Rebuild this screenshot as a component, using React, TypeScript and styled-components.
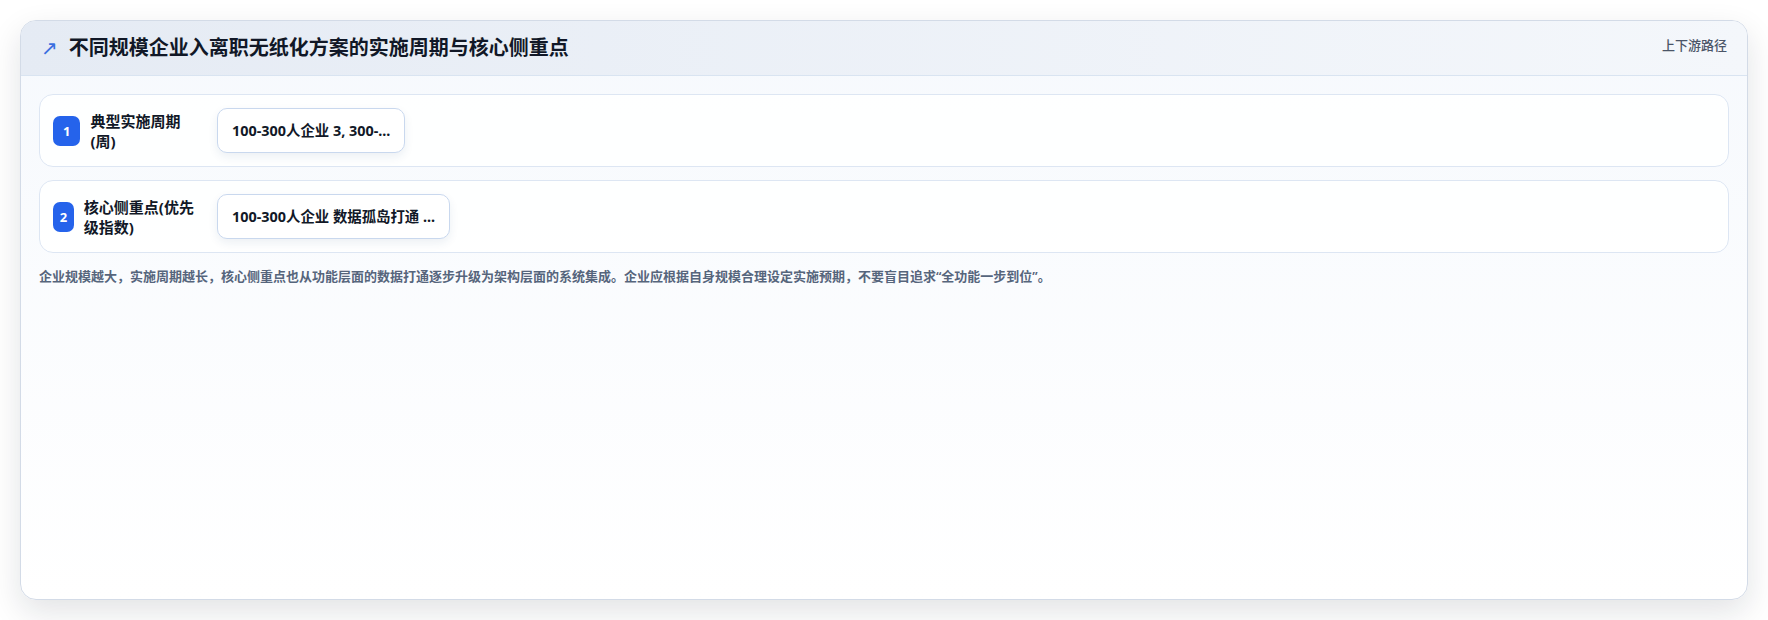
import React from 'react';
import styled, { createGlobalStyle } from 'styled-components';

const GlobalStyle = createGlobalStyle`
  html, body {
    margin: 0;
    padding: 0;
    background: #ffffff;
  }
  body {
    font-family: "Noto Sans", "Noto Sans CJK SC", sans-serif;
    color: #111827;
  }
`;

const items = [
  {
    label: '典型实施周期(周)',
    value: '100-300人企业 3, 300-1000人企业 6, 1000人以上企业 12',
  },
  {
    label: '核心侧重点(优先级指数)',
    value: '100-300人企业 数据孤岛打通 8, 300-1000人企业 流程标准化 7',
  },
];

const shorten = (text: string, max = 18) =>
  text.length > max ? text.slice(0, max) + '...' : text;

const App = () => {
  return (
    <Page>
      <GlobalStyle />
      <Card>
        <Header>
          <TitleWrap>
            <TitleIcon>↗</TitleIcon>
            <Title>不同规模企业入离职无纸化方案的实施周期与核心侧重点</Title>
          </TitleWrap>
          <HeaderTag>上下游路径</HeaderTag>
        </Header>
        <Body>
          {items.map((item, i) => (
            <Row key={item.label}>
              <RowHead>
                <Badge>{i + 1}</Badge>
                <Label>{item.label}</Label>
              </RowHead>
              <Chip>{shorten(item.value)}</Chip>
            </Row>
          ))}
          <Note>
            企业规模越大，实施周期越长，核心侧重点也从功能层面的数据打通逐步升级为架构层面的系统集成。企业应根据自身规模合理设定实施预期，不要盲目追求“全功能一步到位”。
          </Note>
        </Body>
      </Card>
    </Page>
  );
};

export default App;

const Page = styled.div`
  padding: 20px;
`;

const Card = styled.section`
  height: 580px;
  box-sizing: border-box;
  display: flex;
  flex-direction: column;
  border: 1px solid #d3dbe7;
  border-radius: 16px;
  overflow: hidden;
  background: linear-gradient(180deg, #f6f9fd 0%, #ffffff 100%);
  box-shadow: 0 12px 32px rgba(15, 23, 42, 0.12);
`;

const Header = styled.header`
  display: flex;
  justify-content: space-between;
  align-items: flex-start;
  padding: 13px 20px;
  background: linear-gradient(90deg, #e5ebf4 0%, #f4f7fb 100%);
  border-bottom: 1px solid #d9e4f1;
`;

const TitleWrap = styled.div`
  display: flex;
  align-items: center;
  gap: 11px;
`;

const TitleIcon = styled.span`
  font-family: "DejaVu Sans", sans-serif;
  font-size: 20px;
  font-weight: 400;
  line-height: 28px;
  color: #3b6fe0;
`;

const Title = styled.h2`
  margin: 0;
  font-size: 20px;
  line-height: 28px;
  font-weight: 700;
  color: #111827;
`;

const HeaderTag = styled.span`
  margin-top: 1px;
  font-size: 13px;
  line-height: 20px;
  font-weight: 500;
  color: #4b5568;
`;

const Body = styled.div`
  display: flex;
  flex-direction: column;
  gap: 13px;
  padding: 18px;
`;

const Row = styled.div`
  display: flex;
  align-items: center;
  gap: 14px;
  padding: 13px;
  border: 1px solid #dde6f3;
  border-radius: 14px;
  background: rgba(255, 255, 255, 0.85);
`;

const RowHead = styled.div`
  display: flex;
  align-items: center;
  gap: 10px;
  flex: 0 0 150px;
`;

const Badge = styled.span`
  width: 28px;
  height: 30px;
  display: flex;
  align-items: center;
  justify-content: center;
  border-radius: 7px;
  background: #2563eb;
  color: #ffffff;
  font-size: 13px;
  font-weight: 700;
`;

const Label = styled.span`
  font-size: 15px;
  line-height: 20px;
  font-weight: 700;
  color: #111827;
`;

const Chip = styled.div`
  padding: 11px 14px;
  font-size: 14.4px;
  line-height: 21px;
  font-weight: 700;
  color: #111827;
  white-space: nowrap;
  background: #ffffff;
  border: 1px solid #c9d8ee;
  border-radius: 10px;
  box-shadow: 0 4px 10px rgba(30, 64, 120, 0.08);
`;

const Note = styled.p`
  margin: 0;
  font-size: 13px;
  line-height: 20px;
  font-weight: 600;
  color: #56657c;
`;
